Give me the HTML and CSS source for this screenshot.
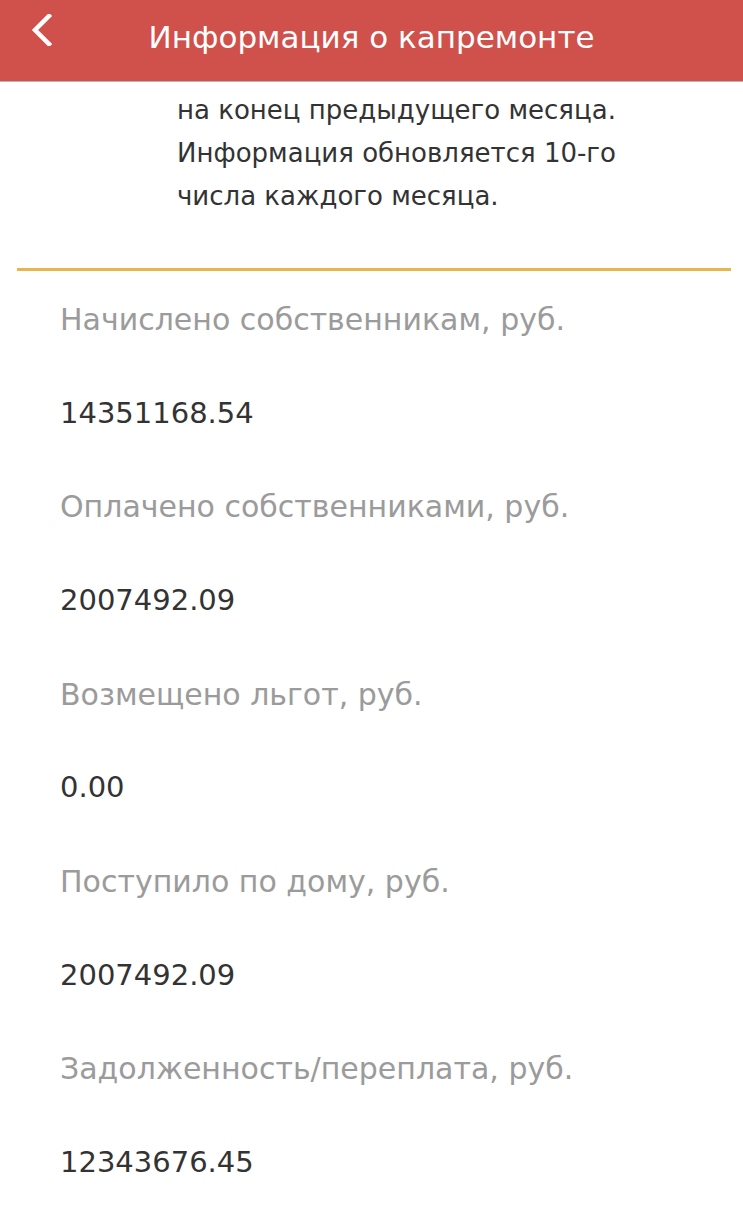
FILE: index.html
```html
<!DOCTYPE html>
<html lang="ru">
<head>
<meta charset="utf-8">
<title>Информация о капремонте</title>
<link rel="stylesheet" href="styles.css">
</head>
<body>
<div class="screen">
  <header class="topbar">
    <a class="back" href="#" aria-label="Назад">
      <svg width="24" height="32" viewBox="0 0 24 32"><path d="M20 2 L6 16 L20 30" fill="none" stroke="#fff" stroke-width="4.5" stroke-linecap="square" stroke-linejoin="miter"/></svg>
    </a>
    <h1 class="title">Информация о капремонте</h1>
  </header>
  <main class="content">
    <p class="note">Сведения представлены по дому<br>на конец предыдущего месяца.<br>Информация обновляется 10-го<br>числа каждого месяца.</p>
    <hr class="divider">
    <dl class="list">
      <dt class="label">Начислено собственникам, руб.</dt>
      <dd class="value">14351168.54</dd>
      <dt class="label">Оплачено собственниками, руб.</dt>
      <dd class="value">2007492.09</dd>
      <dt class="label">Возмещено льгот, руб.</dt>
      <dd class="value">0.00</dd>
      <dt class="label">Поступило по дому, руб.</dt>
      <dd class="value">2007492.09</dd>
      <dt class="label">Задолженность/переплата, руб.</dt>
      <dd class="value">12343676.45</dd>
    </dl>
  </main>
</div>
</body>
</html>
```

FILE: styles.css
```css
html, body {
  margin: 0;
  padding: 0;
  background: #ffffff;
}
body {
  font-family: "DejaVu Sans", "Liberation Sans", sans-serif;
  color: #333333;
}
.screen {
  position: relative;
  width: 743px;
  height: 1231px;
  overflow: hidden;
}
.topbar {
  position: absolute;
  top: 0;
  left: 0;
  right: 0;
  height: 81px;
  background: #d0504b;
  border-bottom: 1px solid #b4b4b4;
  display: flex;
  align-items: center;
  justify-content: center;
  z-index: 2;
}
.back {
  position: absolute;
  left: 29px;
  top: 14px;
  display: block;
  line-height: 0;
}
.title {
  margin: 0;
  margin-top: -8px;
  color: #ffffff;
  font-weight: normal;
  font-size: 31px;
}
.content {
  padding-top: 46px;
}
.note {
  margin: 0;
  padding-left: 177px;
  font-size: 26px;
  line-height: 43px;
  color: #333333;
}
.divider {
  margin: 50px 12px 0 17px;
  height: 3px;
  border: 0;
  background: #e8b64c;
}
.list {
  margin: 0;
  padding: 2px 0 0 60px;
}
.label, .value {
  margin: 0;
  font-size: 29px;
  line-height: 93.67px;
}
.label {
  font-size: 30px;
  color: #9b9b9b;
}
.value {
  color: #333333;
}
```
